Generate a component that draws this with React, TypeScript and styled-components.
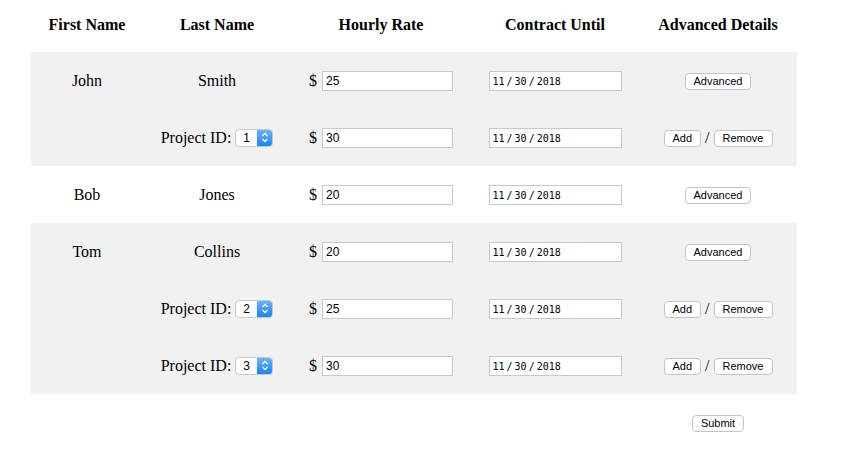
import React from "react";
import styled, { createGlobalStyle } from "styled-components";

interface IProject {
  id: number;
  rate: number;
}
interface IEmployee {
  first: string;
  last: string;
  rate: number;
  projects: IProject[];
}

const employees: IEmployee[] = [
  { first: "John", last: "Smith", rate: 25, projects: [{ id: 1, rate: 30 }] },
  { first: "Bob", last: "Jones", rate: 20, projects: [] },
  {
    first: "Tom",
    last: "Collins",
    rate: 20,
    projects: [
      { id: 2, rate: 25 },
      { id: 3, rate: 30 },
    ],
  },
];

const DATE = "11 / 30 / 2018";

function Rate({ value }: { value: number }) {
  return (
    <RateWrap>
      $<TextInput defaultValue={value} />
    </RateWrap>
  );
}

function ProjectSelect({ value }: { value: number }) {
  return (
    <SelectBox>
      <span>{value}</span>
      <Stepper>
        <svg width="8" height="11" viewBox="0 0 8 11">
          <path
            d="M1.5 4 L4 1.5 L6.5 4 M1.5 7 L4 9.5 L6.5 7"
            fill="none"
            stroke="#fff"
            strokeWidth="1.3"
          />
        </svg>
      </Stepper>
    </SelectBox>
  );
}

function App() {
  return (
    <>
      <GlobalStyle />
      <Page>
        <Table>
          <colgroup>
            <col style={{ width: 112 }} />
            <col style={{ width: 148 }} />
            <col style={{ width: 180 }} />
            <col style={{ width: 168 }} />
            <col style={{ width: 158 }} />
          </colgroup>
          <thead>
            <tr>
              <Th>First Name</Th>
              <Th>Last Name</Th>
              <Th>Hourly Rate</Th>
              <Th>Contract Until</Th>
              <Th>Advanced Details</Th>
            </tr>
          </thead>
          {employees.map((e, i) => (
            <Group key={e.first} shaded={i % 2 === 0}>
              <tr>
                <Td>{e.first}</Td>
                <Td>{e.last}</Td>
                <Td>
                  <Rate value={e.rate} />
                </Td>
                <Td>
                  <DateInput defaultValue={DATE} />
                </Td>
                <Td>
                  <Button>Advanced</Button>
                </Td>
              </tr>
              {e.projects.map((p) => (
                <tr key={p.id}>
                  <Td />
                  <Td>
                    <ProjectLabel>
                      Project ID: <ProjectSelect value={p.id} />
                    </ProjectLabel>
                  </Td>
                  <Td>
                    <Rate value={p.rate} />
                  </Td>
                  <Td>
                    <DateInput defaultValue={DATE} />
                  </Td>
                  <Td>
                    <Actions>
                      <Button>Add</Button>/<Button>Remove</Button>
                    </Actions>
                  </Td>
                </tr>
              ))}
            </Group>
          ))}
          <tbody>
            <tr>
              <Td colSpan={4} />
              <Td>
                <Button>Submit</Button>
              </Td>
            </tr>
          </tbody>
        </Table>
      </Page>
    </>
  );
}
export default App;

const GlobalStyle = createGlobalStyle`
  body {
    margin: 0;
    background: #ffffff;
    font-family: "Liberation Serif", "Times New Roman", serif;
    color: #000000;
  }
`;
const Page = styled.div`
  padding-left: 31px;
`;
const Table = styled.table`
  border-collapse: collapse;
  table-layout: fixed;
  width: 766px;
`;
const Th = styled.th`
  height: 36px;
  padding: 16px 0 0;
  vertical-align: top;
  font-size: 16px;
  line-height: 18px;
  font-weight: bold;
  text-align: center;
`;
const Group = styled.tbody<{ shaded: boolean }>`
  background: ${(p) => (p.shaded ? "#f1f1f1" : "#ffffff")};
`;
const Td = styled.td`
  height: 57px;
  padding: 0;
  text-align: center;
  vertical-align: middle;
  font-size: 16px;
  line-height: 18px;
`;
const RateWrap = styled.div`
  display: inline-flex;
  align-items: center;
  gap: 5px;
  font-size: 16px;
`;
const TextInput = styled.input`
  box-sizing: border-box;
  width: 131px;
  height: 20px;
  border: 1px solid #c8c8c8;
  background: #ffffff;
  padding: 1px 3px 0;
  font-family: "Liberation Sans", Arial, sans-serif;
  font-size: 12px;
  color: #000;
  outline: none;
`;
const DateInput = styled.input`
  box-sizing: border-box;
  width: 133px;
  height: 20px;
  border: 1px solid #c8c8c8;
  background: #ffffff;
  padding: 1px 3px 0;
  font-family: "DejaVu Sans Mono", monospace;
  font-size: 10px;
  word-spacing: -4px;
  color: #000;
  outline: none;
`;
const ProjectLabel = styled.div`
  display: inline-flex;
  align-items: center;
  gap: 4px;
  white-space: nowrap;
`;
const SelectBox = styled.div`
  box-sizing: border-box;
  display: inline-flex;
  align-items: stretch;
  width: 38px;
  height: 18px;
  border: 1px solid #c9c9c9;
  border-radius: 4px;
  background: #ffffff;
  overflow: hidden;
  font-family: "Liberation Sans", Arial, sans-serif;
  font-size: 12px;
  span {
    flex: 1;
    display: flex;
    align-items: center;
    padding-left: 7px;
  }
`;
const Stepper = styled.div`
  width: 15px;
  display: flex;
  align-items: center;
  justify-content: center;
  background: linear-gradient(#6cb3fa, #1a82fb);
`;
const Button = styled.button`
  box-sizing: border-box;
  height: 17px;
  padding: 0 8px;
  border: 1px solid #c4c4c4;
  border-radius: 4px;
  background: #ffffff;
  font-family: "Liberation Sans", Arial, sans-serif;
  font-size: 11px;
  line-height: 15px;
  color: #000;
  cursor: pointer;
`;
const Actions = styled.div`
  display: inline-flex;
  align-items: center;
  gap: 4px;
  font-size: 16px;
`;
